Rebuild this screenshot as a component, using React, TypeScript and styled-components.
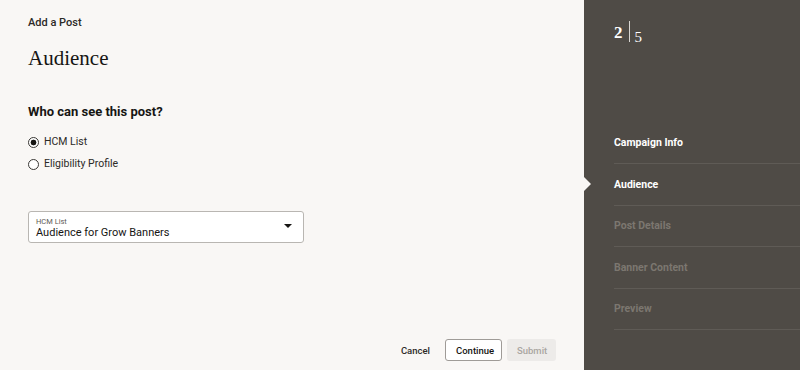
import React from 'react'
import styled, { createGlobalStyle } from 'styled-components';

const steps = [
  { label: 'Campaign Info', done: true },
  { label: 'Audience', done: true, current: true },
  { label: 'Post Details' },
  { label: 'Banner Content' },
  { label: 'Preview' },
];

export default function App() {
  return (
    <Page>
      <GlobalStyle />
      <Main>
        <Crumb>Add a Post</Crumb>
        <Title>Audience</Title>
        <Question>Who can see this post?</Question>
        <RadioGroup>
          <RadioRow>
            <Radio $checked />
            HCM List
          </RadioRow>
          <RadioRow>
            <Radio />
            Eligibility Profile
          </RadioRow>
        </RadioGroup>
        <Select>
          <SelectText>
            <SelectLabel>HCM List</SelectLabel>
            <SelectValue>Audience for Grow Banners</SelectValue>
          </SelectText>
          <Caret />
        </Select>
        <Footer>
          <TextButton>Cancel</TextButton>
          <OutlineButton>Continue</OutlineButton>
          <DisabledButton disabled>Submit</DisabledButton>
        </Footer>
      </Main>
      <Side>
        <Counter>
          <Big>2</Big>
          <Bar />
          <Small>5</Small>
        </Counter>
        <Steps>
          {steps.map(s => (
            <Step key={s.label} $done={s.done}>
              {s.current && <Pointer />}
              {s.label}
            </Step>
          ))}
        </Steps>
      </Side>
    </Page>
  )
}

const GlobalStyle = createGlobalStyle`
    html, body {
        margin: 0;
        padding: 0;
    }
    body {
        font-family: Roboto, "Noto Sans", sans-serif;
        color: #161513;
    }
`;

const Page = styled.div`
    width: 800px;
    height: 370px;
    display: flex;
    overflow: hidden;
`;

const Main = styled.div`
    flex: 1;
    background: #f9f7f5;
    padding: 15px 28px 0;
    display: flex;
    flex-direction: column;
`;

const Crumb = styled.div`
    font-size: 11px;
    font-weight: 500;
    line-height: 15px;
    color: #2c2a27;
`;

const Title = styled.h1`
    margin: 15px 0 0;
    font-family: "Liberation Serif", "DejaVu Serif", serif;
    font-weight: 400;
    font-size: 21px;
    line-height: 26px;
`;

const Question = styled.h2`
    margin: 32px 0 0;
    font-size: 13px;
    font-weight: 700;
    line-height: 18px;
`;

const RadioGroup = styled.div`
    margin-top: 13px;
    display: flex;
    flex-direction: column;
    gap: 6px;
`;

const RadioRow = styled.label`
    display: flex;
    align-items: center;
    gap: 5px;
    font-size: 10.5px;
    line-height: 16px;
    color: #2c2a27;
`;

const Radio = styled.span<{ $checked?: boolean }>`
    width: 9px;
    height: 9px;
    border: 1px solid #3a3835;
    border-radius: 50%;
    background: ${p => p.$checked ? 'radial-gradient(circle, #161513 0 2.6px, #fff 3.2px)' : '#fff'};
`;

const Select = styled.div`
    margin-top: 39px;
    width: 276px;
    height: 32px;
    box-sizing: border-box;
    border: 1px solid #b9b6b2;
    border-radius: 3px;
    background: #fff;
    display: flex;
    align-items: center;
    padding: 0 11px 0 7px;
`;

const SelectText = styled.div`
    flex: 1;
    display: flex;
    flex-direction: column;
    padding-top: 2px;
`;

const SelectLabel = styled.span`
    font-size: 7.5px;
    line-height: 9px;
    color: #5d5a56;
`;

const SelectValue = styled.span`
    font-size: 11px;
    line-height: 13px;
    color: #161513;
`;

const Caret = styled.span`
    width: 0;
    height: 0;
    border-left: 4px solid transparent;
    border-right: 4px solid transparent;
    border-top: 4px solid #161513;
    margin-bottom: 2px;
`;

const Footer = styled.div`
    margin-top: auto;
    margin-bottom: 9px;
    display: flex;
    justify-content: flex-end;
    align-items: center;
    gap: 5px;
`;

const ButtonBase = styled.button`
    font-family: Roboto, "Noto Sans", sans-serif;
    font-size: 9.5px;
    font-weight: 500;
    height: 22px;
    border-radius: 3px;
    padding: 0 10px;
    cursor: pointer;
`;

const TextButton = styled(ButtonBase)`
    background: transparent;
    border: none;
    color: #2c2a27;
`;

const OutlineButton = styled(ButtonBase)`
    background: #fff;
    border: 1px solid #9f9b97;
    color: #161513;
    width: 57px;
`;

const DisabledButton = styled(ButtonBase)`
    background: #edebe9;
    border: none;
    color: #aaa6a1;
    width: 49px;
`;

const Side = styled.div`
    width: 216px;
    background: #4f4b46;
    padding: 21px 0 0 30px;
    box-sizing: border-box;
    display: flex;
    flex-direction: column;
`;

const Counter = styled.div`
    display: flex;
    align-items: flex-start;
    font-family: "Liberation Serif", "DejaVu Serif", serif;
    color: #fff;
    height: 22px;
`;

const Big = styled.span`
    font-size: 17px;
    line-height: 17px;
    margin-top: 3px;
    font-weight: 700;
`;

const Bar = styled.span`
    width: 1px;
    height: 21px;
    background: #d9d6d2;
    margin: 0 5px 0 6px;
`;

const Small = styled.span`
    font-size: 15px;
    line-height: 15px;
    margin-top: 9px;
`;

const Steps = styled.ul`
    list-style: none;
    margin: 79px 0 0;
    padding: 0;
`;

const Step = styled.li<{ $done?: boolean }>`
    position: relative;
    height: 41.5px;
    display: flex;
    align-items: center;
    font-size: 10.5px;
    font-weight: 700;
    color: ${p => p.$done ? '#ffffff' : '#7c7770'};
    border-bottom: 1px solid #5f5b56;
    box-sizing: border-box;
    &:first-child {
        height: 42px;
    }
`;

const Pointer = styled.span`
    position: absolute;
    left: -30px;
    top: 50%;
    margin-top: -7px;
    width: 0;
    height: 0;
    border-top: 7px solid transparent;
    border-bottom: 7px solid transparent;
    border-left: 7px solid #f9f7f5;
`;
